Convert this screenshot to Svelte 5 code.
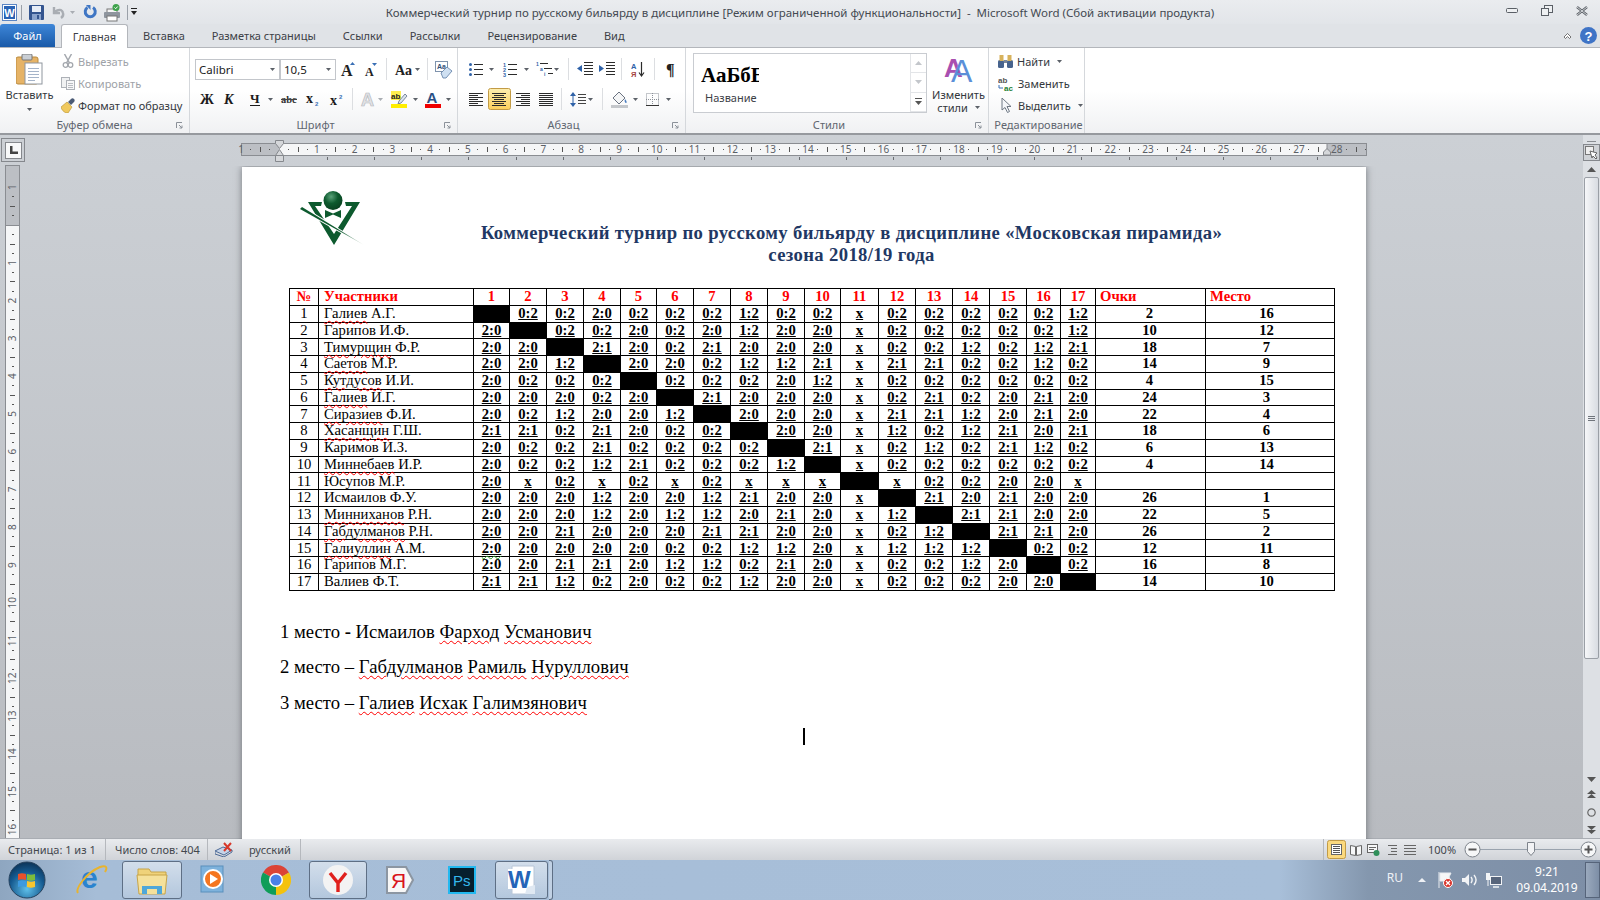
<script>
  const bar = (x, y, w, c = '#333', h = 1) => `<rect x="${x}" y="${y}" width="${w}" height="${h}" fill="${c}"/>`
  const txt = (x, y, s, size, fill = '#222', extra = '') =>
    `<text x="${x}" y="${y}" font-size="${size}" fill="${fill}" ${extra}>${s}</text>`
  const serif = 'font-family="Liberation Serif" font-weight="bold"'
  const sans = 'font-family="Liberation Sans" font-weight="bold"'
  const lines = (spec, c = '#333') => spec.map(([x, y, w]) => bar(x, y, w, c)).join('')
  const alignRows = (xs) => xs.map(([x, w], k) => bar(x, k * 2, w, '#2b2b2b')).join('')

  const icons = {
    word: { w: 15, h: 17, s: `<rect x=".5" y=".5" width="14" height="16" fill="#fff" stroke="#5b86c4"/><rect x="2" y="2" width="11" height="13" fill="#2a63b4"/>` + txt(2.2, 13, 'W', 11, '#fff', sans) },
    qsep: { w: 1, h: 15, s: bar(0, 0, 1, '#9aa0a8', 15) },
    save: { w: 15, h: 15, s: `<rect width="15" height="15" rx="1" fill="#34558f"/><rect x="3" y="1" width="9" height="6" fill="#e8eef7"/><rect x="3" y="9" width="9" height="6" fill="#8aa3cc"/><rect x="8" y="10" width="2" height="4" fill="#34558f"/>` },
    undo: { w: 13, h: 13, s: `<path d="M2 1v6h6M3 6c3-3 7-3 8 1 .6 2-.5 4-2 5" fill="none" stroke="#a9adb3" stroke-width="2.4"/>` },
    dim: { w: 5, h: 3, s: `<path d="M0 0h5l-2.500 3z" fill="#a9adb3"/>` },
    redo: { w: 13, h: 14, s: `<path d="M9 2.500a5 5 0 1 1-5.500 0" fill="none" stroke="#3f76c4" stroke-width="3"/><path d="M2 0h4.500v5z" fill="#3f76c4"/>` },
    print: { w: 17, h: 17, s: `<rect x="3" y="5" width="10" height="4" fill="#f5f5f5" stroke="#777"/><rect y="8" width="16" height="6" rx="1" fill="#8e959e"/><rect x="3" y="12" width="10" height="5" fill="#fff" stroke="#777"/><circle cx="12" cy="3.500" r="3.500" fill="#3fa34d"/><path d="M10.500 3.500l1.200 1.200 2-2.200" stroke="#fff" fill="none"/>` },
    custom: { w: 6, h: 8, s: bar(0, 0, 6, '#222') + `<path d="M0 3h6L3 7z" fill="#222"/>` },

    paste: { w: 27, h: 31, s: `<rect y="3" width="22" height="27" rx="2" fill="#e6b366" stroke="#b98a3e"/><rect x="6" y="0" width="10" height="6" rx="1" fill="#c9ced4" stroke="#777"/><rect x="9" y="9" width="17" height="21" fill="#fff" stroke="#8f969e"/>` + lines([[12, 14, 11], [12, 17, 11], [12, 20, 11], [12, 23, 11], [12, 26, 7]], '#a5b4c9') },
    cut: { w: 11, h: 14, s: `<path d="M2 0l5 9M9 0L4 9" stroke="#a4a8ae" stroke-width="1.500"/><circle cx="3" cy="11" r="2.300" fill="none" stroke="#a4a8ae" stroke-width="1.300"/><circle cx="8" cy="11" r="2.300" fill="none" stroke="#a4a8ae" stroke-width="1.300"/>` },
    copy: { w: 14, h: 13, s: `<rect x=".5" y=".5" width="8" height="10" fill="#f0f1f2" stroke="#adb1b7"/><rect x="5.500" y="3.500" width="8" height="9" fill="#f7f7f8" stroke="#adb1b7"/>` + lines([[7, 6, 5], [7, 8, 5], [7, 10, 5]], '#b9bcc1') },
    brush: { w: 16, h: 15, s: `<path d="M0 9l6-5 5 5-4 6C4 15 1 13 0 9z" fill="#f0c95e" stroke="#b48f2f" stroke-width=".6"/><path d="M7 4l3-3c2-2 5 1 3 3l-3 3z" fill="#4a5a75"/>` },

    grow: { w: 13, h: 14, s: txt(0, 14, 'A', 16, '#222', serif) + `<path d="M9 3l2.500-3L14 3z" fill="#3a6fb5"/>` },
    shrink: { w: 13, h: 14, s: txt(1, 14, 'A', 12, '#222', serif) + `<path d="M8 1h5l-2.500 3z" fill="#3a6fb5"/>` },
    sep: { w: 1, h: 22, s: bar(0, 0, 1, '#dcdee1', 22) },
    case: { w: 18, h: 14, s: txt(0, 13, 'Aa', 14, '#222', serif) },
    ar: { w: 5, h: 3, s: `<path d="M0 0h5l-2.500 3z" fill="#5c6168"/>` },
    clear: { w: 17, h: 17, s: `<rect x=".5" y=".5" width="12" height="10" fill="#fff" stroke="#7f93ad"/>` + txt(2, 8, 'Aa', 7, '#33507a', sans) + `<path d="M6 12l6-6 5 4-6 7H8z" fill="#cfe0f2" stroke="#5b7ba3" stroke-width=".8"/>` },
    bold: { w: 13, h: 14, s: txt(0, 12, 'Ж', 14, '#1b1b1b', serif) },
    ital: { w: 12, h: 14, s: txt(0, 12, 'К', 14, '#1b1b1b', serif + ' font-style="italic"') },
    under: { w: 10, h: 15, s: txt(0, 11, 'Ч', 13, '#1b1b1b', serif) + bar(0, 13, 10, '#1b1b1b') },
    strike: { w: 16, h: 12, s: txt(0, 10, 'abc', 10.500, '#333', serif) + bar(0, 6, 16, '#444') },
    sub: { w: 13, h: 13, s: txt(0, 10, 'x', 14, '#1b1b1b', serif) + txt(9, 13, '2', 6, '#3a6fb5', sans) },
    sup: { w: 13, h: 13, s: txt(0, 12, 'x', 14, '#1b1b1b', serif) + txt(9, 6, '2', 6, '#3a6fb5', sans) },
    effect: { w: 14, h: 15, s: txt(0, 14, 'A', 18, '#e2e3e6', sans + ' stroke="#b6b9be" stroke-width=".7"') },
    high: { w: 16, h: 17, s: `<rect width="10" height="9" fill="#ffef4f"/>` + txt(0, 8, 'ab', 8, '#222', sans) + `<path d="M8 10l6-7 2 2-6 7-3 1z" fill="#dbe4ee" stroke="#5d6f88" stroke-width=".8"/>` + bar(0, 13, 16, '#ffee00', 4) },
    color: { w: 16, h: 17, s: txt(1.500, 12, 'A', 15, '#2a4f85', sans) + bar(0, 13, 16, '#f00000', 4) },

    bullets: { w: 14, h: 13, s: [0, 5, 10].map(y => `<circle cx="1.500" cy="${y + 1.500}" r="1.500" fill="#2f62a8"/>` + bar(5, y + 1, 9, '#2b2b2b')).join('') },
    numbers: { w: 14, h: 13, s: [['1', 0], ['2', 5], ['3', 10]].map(([n, y]) => txt(0, y + 4, n, 5.500, '#2f62a8', sans) + bar(5, y + 1, 9, '#2b2b2b')).join('') },
    multi: { w: 17, h: 14, s: txt(0, 4, '1', 5, '#2f62a8', sans) + bar(4, 1, 8, '#2b2b2b') + txt(4, 9, 'a', 5, '#2f62a8', sans) + bar(8, 6, 8, '#2b2b2b') + txt(8, 14, 'i', 5, '#2f62a8', sans) + bar(12, 11, 5, '#2b2b2b') },
    outdent: { w: 16, h: 14, s: [0, 3, 6, 9, 12].map(y => bar(7, y, 9, '#2b2b2b')).join('') + `<path d="M0 6.500L5 3v7z" fill="#2f62a8"/>` },
    indent: { w: 16, h: 14, s: [0, 3, 6, 9, 12].map(y => bar(7, y, 9, '#2b2b2b')).join('') + `<path d="M5 6.500L0 3v7z" fill="#2f62a8"/>` },
    sort: { w: 14, h: 15, s: txt(0, 7, 'А', 7.500, '#2f62a8', sans) + txt(0, 15, 'Я', 7.500, '#a3423f', sans) + `<path d="M10.500 0v13M8 10.500l2.500 3.500 2.500-3.500" fill="none" stroke="#2b2b2b" stroke-width="1.200"/>` },
    para: { w: 10, h: 15, s: txt(0, 13, '¶', 16, '#222', serif) },
    left: { w: 14, h: 13, s: alignRows([[0, 14], [0, 9], [0, 14], [0, 9], [0, 14], [0, 9], [0, 14]]) },
    centerOn: { w: 23, h: 22, s: `<defs><linearGradient id="hot" x1="0" y1="0" x2="0" y2="1"><stop offset="0" stop-color="#fdeeb0"/><stop offset="1" stop-color="#fbcf5c"/></linearGradient></defs><rect x=".5" y=".5" width="22" height="21" rx="2" fill="url(#hot)" stroke="#c29b46"/>` + [[4, 14], [6, 10], [4, 14], [6, 10], [4, 14], [6, 10], [4, 14]].map(([x, w], k) => bar(x, 5 + k * 2, w, '#2b2b2b')).join('') },
    right: { w: 14, h: 13, s: alignRows([[0, 14], [5, 9], [0, 14], [5, 9], [0, 14], [5, 9], [0, 14]]) },
    just: { w: 14, h: 13, s: alignRows([[0, 14], [0, 14], [0, 14], [0, 14], [0, 14], [0, 14], [0, 14]]) },
    spacing: { w: 16, h: 15, s: `<path d="M3 0L0 4h6zM3 15L0 11h6z" fill="#2f62a8"/>` + bar(2.500, 4, 1, '#2f62a8', 7) + [2, 5, 8, 11].map(y => bar(8, y, 8, '#444')).join('') },
    fill: { w: 17, h: 17, s: `<path d="M2 7l6-6 6 6-6 6z" fill="#f4f5f6" stroke="#6a7280"/><path d="M14 8c2 2 2 4 1 4s-2-2-1-4z" fill="#4c7fc0"/>` + bar(0, 14, 17, '#c4c7cb', 3) },
    borders: { w: 13, h: 13, s: `<rect x=".5" y=".5" width="12" height="12" fill="none" stroke="#8b9098" stroke-dasharray="1 1"/><path d="M6.500 0v13M0 6.500h13" stroke="#8b9098" stroke-dasharray="1 1"/>` + bar(0, 12, 13, '#333') },

    bino: { w: 15, h: 13, s: `<rect x="0" y="5" width="6" height="8" rx="1.500" fill="#47638d"/><rect x="9" y="5" width="6" height="8" rx="1.500" fill="#47638d"/><rect x="1.500" y="0" width="4" height="6" fill="#d7b25c"/><rect x="9.500" y="0" width="4" height="6" fill="#d7b25c"/><rect x="6" y="5" width="3" height="3" fill="#7a8698"/>` },
    replace: { w: 16, h: 15, s: txt(0, 7, 'ab', 8, '#555', sans) + txt(6, 15, 'ac', 8, '#1d7e2f', sans) + `<path d="M1 9v3h4" fill="none" stroke="#3a6fb5"/>` },
    select: { w: 10, h: 15, s: `<path d="M1 0v12l3-2.500 2.500 5 2-1-2.500-5H10z" fill="#f5f7fa" stroke="#6f7884"/>` },

    close: { w: 12, h: 10, s: `<path d="M1 1l10 8M11 1L1 9" stroke="#5a5f66" stroke-width="2.400"/><path d="M1 1l10 8M11 1L1 9" stroke="#eef0f2" stroke-width=".8"/>` },
    min: { w: 12, h: 5, s: `<rect x=".5" y=".5" width="11" height="4" rx="1" fill="#eef0f2" stroke="#5a5f66"/>` },
    restore: { w: 12, h: 11, s: `<rect x="3.500" y=".5" width="8" height="7" fill="#eef0f2" stroke="#5a5f66"/><rect x=".5" y="3.500" width="7" height="7" fill="#eef0f2" stroke="#5a5f66"/>` },
    up: { w: 9, h: 7, s: `<path d="M1 5l3.500-3.500L8 5 6.500 6.500 4.500 4.500l-2 2z" fill="#fff" stroke="#555" stroke-width=".8"/>` },
    help: { w: 17, h: 17, s: `<circle cx="8.500" cy="8.500" r="8.500" fill="#3f74c6"/>` + txt(4.500, 13.500, '?', 13, '#fff', sans) },

    book: { w: 18, h: 15, s: `<path d="M0 9l8-4 9 3-8 5z" fill="#c6d4e8" stroke="#4d6a97"/><path d="M0 10v2l9 3 8-5V8" fill="none" stroke="#4d6a97"/><path d="M9 1l7 8M16 1L9 9" stroke="#d8382a" stroke-width="2"/>` },
    printOn: { w: 19, h: 19, s: `<rect x=".5" y=".5" width="18" height="18" rx="2" fill="#fbd97e" stroke="#c29b46"/><rect x="4.500" y="4.500" width="10" height="10" fill="#fff" stroke="#666"/>` + [6, 8, 10, 12].map(y => bar(6, y, 7, '#555')).join('') },
    read: { w: 12, h: 12, s: `<path d="M.5 1.500l5 1v9l-5-1zM11.500 1.500l-5 1v9l5-1z" fill="#f6f7f8" stroke="#666"/>` },
    web: { w: 13, h: 12, s: `<rect x=".5" y=".5" width="10" height="8" fill="#f6f7f8" stroke="#666"/><circle cx="9.500" cy="9" r="3" fill="#2f8f5a"/>` + lines([[2, 3, 7], [2, 5, 5]], '#666') },
    outline: { w: 10, h: 10, s: lines([[1, 0, 9], [4, 3, 6], [4, 6, 6], [1, 9, 9]], '#666') },
    draft: { w: 12, h: 10, s: lines([[0, 0, 12], [0, 3, 12], [0, 6, 12], [0, 9, 12]], '#666') },

    flagTray: { w: 15, h: 16, s: `<path d="M1 0v16M2 1h11l-2 4 2 4H2z" fill="#f6f7f8" stroke="#e9ecf0"/><circle cx="10" cy="11" r="4.500" fill="#d9342b" stroke="#fff"/><path d="M8 9l4 4M12 9l-4 4" stroke="#fff" stroke-width="1.300"/>` },
    speaker: { w: 15, h: 14, s: `<path d="M0 5h3l4-4v12l-4-4H0z" fill="#f2f4f6"/><path d="M9 4c1.500 2 1.500 4 0 6M12 2c2.500 3 2.500 7 0 10" fill="none" stroke="#f2f4f6" stroke-width="1.400"/>` },
    network: { w: 16, h: 15, s: `<rect x="4.500" y="3.500" width="11" height="8" fill="#57657b" stroke="#f2f4f6"/><path d="M7 14h6" stroke="#f2f4f6" stroke-width="1.500"/><rect x="0" y="0" width="4" height="7" fill="#f2f4f6"/><path d="M2 7v6" stroke="#f2f4f6"/>` },
    trayUp: { w: 8, h: 4, s: `<path d="M0 4l4-4 4 4z" fill="#eef1f5"/>` }
  }

  // items are [icon, absolute x]; the gap before each one comes from the x of the previous
  function place(items, x0) {
    let cur = x0
    return items.map(([name, x]) => {
      const ic = icons[name]
      const gap = Math.round(x - cur)
      cur = x + ic.w
      return { ...ic, gap }
    })
  }

  const qat = [['word', 2], ['qsep', 21], ['save', 29], ['undo', 52], ['dim', 70], ['redo', 84], ['print', 104], ['qsep', 127], ['custom', 131]]
  const winBtns = [['min', 1507], ['restore', 1542], ['close', 1577]]
  const font1 = [['grow', 341], ['shrink', 364], ['sep', 386], ['case', 395], ['ar', 415], ['sep', 427], ['clear', 435]]
  const font2 = [['bold', 200], ['ital', 224], ['under', 250], ['ar', 268], ['strike', 281], ['sub', 306], ['sup', 330], ['sep', 352], ['effect', 361], ['dim', 378], ['high', 391], ['ar', 413], ['color', 425], ['ar', 446]]
  const para1 = [['bullets', 469], ['ar', 489], ['numbers', 503], ['ar', 524], ['multi', 536], ['ar', 554], ['sep', 568], ['outdent', 577], ['indent', 599], ['sep', 621], ['sort', 631], ['sep', 654], ['para', 666]]
  const para2 = [['left', 469], ['centerOn', 488], ['right', 516], ['just', 539], ['sep', 561], ['spacing', 570], ['ar', 588], ['sep', 602], ['fill', 611], ['ar', 633], ['borders', 646], ['ar', 666]]
  const statusViews = [['printOn', 1327], ['read', 1350], ['web', 1367], ['outline', 1387], ['draft', 1404]]
  const tray = [['trayUp', 1418], ['flagTray', 1438], ['speaker', 1462], ['network', 1486]]

  const tabs = ['Вставка', 'Разметка страницы', 'Ссылки', 'Рассылки', 'Рецензирование', 'Вид']

  const cm = 37.78
  const hOrigin = 279
  const hNums = Array.from({ length: 30 }, (_, k) => k - 1).filter(n => n !== 0)
  const hMarks = Array.from({ length: 120 }, (_, k) => hOrigin - 38 + (k + 1) * cm / 4)
    .filter(x => x < 1365)
  const colTicks = Array.from({ length: 22 }, (_, k) => 327 + k * 47.15)
  const vNums = Array.from({ length: 18 }, (_, k) => k - 1).filter(n => n !== 0)
  const vMarks = Array.from({ length: 72 }, (_, k) => 187 + (k + 1) * cm / 4)

  const people = [
    ['Галиев', 'А.Г.', true, '# 0:2 0:2 2:0 0:2 0:2 0:2 1:2 0:2 0:2 x 0:2 0:2 0:2 0:2 0:2 1:2', '2', '16'],
    ['Гарипов', 'И.Ф.', false, '2:0 # 0:2 0:2 2:0 0:2 2:0 1:2 2:0 2:0 x 0:2 0:2 0:2 0:2 0:2 1:2', '10', '12'],
    ['Тимурщин', 'Ф.Р.', true, '2:0 2:0 # 2:1 2:0 0:2 2:1 2:0 2:0 2:0 x 0:2 0:2 1:2 0:2 1:2 2:1', '18', '7'],
    ['Саетов', 'М.Р.', true, '2:0 2:0 1:2 # 2:0 2:0 0:2 1:2 1:2 2:1 x 2:1 2:1 0:2 0:2 1:2 0:2', '14', '9'],
    ['Кутдусов', 'И.И.', true, '2:0 0:2 0:2 0:2 # 0:2 0:2 0:2 2:0 1:2 x 0:2 0:2 0:2 0:2 0:2 0:2', '4', '15'],
    ['Галиев', 'И.Г.', true, '2:0 2:0 2:0 0:2 2:0 # 2:1 2:0 2:0 2:0 x 0:2 2:1 0:2 2:0 2:1 2:0', '24', '3'],
    ['Сиразиев', 'Ф.И.', true, '2:0 0:2 1:2 2:0 2:0 1:2 # 2:0 2:0 2:0 x 2:1 2:1 1:2 2:0 2:1 2:0', '22', '4'],
    ['Хасанщин', 'Г.Ш.', true, '2:1 2:1 0:2 2:1 2:0 0:2 0:2 # 2:0 2:0 x 1:2 0:2 1:2 2:1 2:0 2:1', '18', '6'],
    ['Каримов', 'И.З.', false, '2:0 0:2 0:2 2:1 0:2 0:2 0:2 0:2 # 2:1 x 0:2 1:2 0:2 2:1 1:2 0:2', '6', '13'],
    ['Миннебаев', 'И.Р.', true, '2:0 0:2 0:2 1:2 2:1 0:2 0:2 0:2 1:2 # x 0:2 0:2 0:2 0:2 0:2 0:2', '4', '14'],
    ['Юсупов', 'М.Р.', false, '2:0 x 0:2 x 0:2 x 0:2 x x x # x 0:2 0:2 2:0 2:0 x', '', ''],
    ['Исмаилов', 'Ф.У.', false, '2:0 2:0 2:0 1:2 2:0 2:0 1:2 2:1 2:0 2:0 x # 2:1 2:0 2:1 2:0 2:0', '26', '1'],
    ['Минниханов', 'Р.Н.', true, '2:0 2:0 2:0 1:2 2:0 1:2 1:2 2:0 2:1 2:0 x 1:2 # 2:1 2:1 2:0 2:0', '22', '5'],
    ['Габдулманов', 'Р.Н.', true, '2:0 2:0 2:1 2:0 2:0 2:0 2:1 2:1 2:0 2:0 x 0:2 1:2 # 2:1 2:1 2:0', '26', '2'],
    ['Галиуллин', 'А.М.', true, '2:0 2:0 2:0 2:0 2:0 0:2 0:2 1:2 1:2 2:0 x 1:2 1:2 1:2 # 0:2 0:2', '12', '11'],
    ['Гарипов', 'М.Г.', false, '2:0 2:0 2:1 2:1 2:0 1:2 1:2 0:2 2:1 2:0 x 0:2 0:2 1:2 2:0 # 0:2', '16', '8'],
    ['Валиев', 'Ф.Т.', false, '2:1 2:1 1:2 0:2 2:0 0:2 0:2 1:2 2:0 2:0 x 0:2 0:2 0:2 2:0 2:0 #', '14', '10']
  ]
  const colWidths = [29, 155, 36, 37, 37, 37, 36, 37, 37, 37, 37, 36, 38, 37, 37, 37, 37, 34, 35, 110, 129]
</script>

{#snippet strip(items, x0, cls = '')}
  <div class="strip {cls}">
    {#each place(items, x0) as it}
      <svg width={it.w} height={it.h} viewBox="0 0 {it.w} {it.h}" style="margin-left:{it.gap}px">{@html it.s}</svg>
    {/each}
  </div>
{/snippet}

{#snippet launcher()}
  <svg class="launcher" width="7" height="7" viewBox="0 0 7 7"><path d="M.5 6V.5H6M3 3l3 3M6 3.500V6H3.500" fill="none" stroke="#8b9199"/></svg>
{/snippet}

<div class="word">
  <header class="titlebar">
    {@render strip(qat, 0)}
    <div class="doc-title">Коммерческий турнир по русскому бильярду в дисциплине [Режим ограниченной функциональности]&nbsp; -&nbsp; Microsoft Word (Сбой активации продукта)</div>
    {@render strip(winBtns, 1507, 'winbtns')}
  </header>

  <nav class="tabs">
    <span class="tab-file">Файл</span>
    <span class="tab-active">Главная</span>
    {#each tabs as t}<span class="tab">{t}</span>{/each}
    <div class="tab-right">
      <svg width="9" height="7" viewBox="0 0 9 7">{@html icons.up.s}</svg>
      <svg width="17" height="17" viewBox="0 0 17 17">{@html icons.help.s}</svg>
    </div>
  </nav>

  <section class="ribbon">
    <div class="group g-clip">
      <div class="body">
        <div class="paste">
          <svg width="27" height="31" viewBox="0 0 27 31">{@html icons.paste.s}</svg>
          <span>Вставить</span>
          <svg width="5" height="3" viewBox="0 0 5 3">{@html icons.ar.s}</svg>
        </div>
        <div class="clip-list">
          <div class="clip-row off"><svg width="11" height="14" viewBox="0 0 11 14">{@html icons.cut.s}</svg><span>Вырезать</span></div>
          <div class="clip-row off"><svg width="14" height="13" viewBox="0 0 14 13">{@html icons.copy.s}</svg><span>Копировать</span></div>
          <div class="clip-row fmt"><svg width="16" height="15" viewBox="0 0 16 15">{@html icons.brush.s}</svg><span>Формат по образцу</span></div>
        </div>
      </div>
      <div class="label">Буфер обмена</div>
      {@render launcher()}
    </div>

    <div class="group g-font">
      <div class="body tool-rows">
        <div class="row">
          <div class="combo c-name"><span>Calibri</span><svg width="5" height="3" viewBox="0 0 5 3">{@html icons.ar.s}</svg></div>
          <div class="combo c-size"><span>10,5</span><svg width="5" height="3" viewBox="0 0 5 3">{@html icons.ar.s}</svg></div>
          {@render strip(font1, 336)}
        </div>
        {@render strip(font2, 190, 'row')}
      </div>
      <div class="label off-launcher">Шрифт</div>
      {@render launcher()}
    </div>

    <div class="group g-para">
      <div class="body tool-rows">
        {@render strip(para1, 458, 'row')}
        {@render strip(para2, 458, 'row')}
      </div>
      <div class="label off-launcher">Абзац</div>
      {@render launcher()}
    </div>

    <div class="group g-styles">
      <div class="body styles-body">
        <div class="gallery">
          <div class="style-card">
            <div class="sample">АаБбЕ</div>
            <div class="sample-name">Название</div>
          </div>
          <div class="gal-scroll">
            <span><svg width="7" height="4" viewBox="0 0 7 4"><path d="M0 4l3.500-4L7 4z" fill="#c3c6cb"/></svg></span>
            <span><svg width="7" height="4" viewBox="0 0 7 4"><path d="M0 0l3.500 4L7 0z" fill="#c3c6cb"/></svg></span>
            <span><svg width="7" height="7" viewBox="0 0 7 7"><path d="M0 0h7v1H0zM0 3l3.500 4L7 3z" fill="#555"/></svg></span>
          </div>
        </div>
        <div class="change">
          <svg width="32" height="30" viewBox="0 0 32 30">
            <text x="1" y="24" font-size="26" font-family="Liberation Sans" font-weight="bold" fill="#a94fb0">A</text>
            <text x="8" y="29" font-size="32" font-family="Liberation Sans" fill="#5b8fd8">A</text>
          </svg>
          <span>Изменить</span>
          <span class="change-2">стили <svg width="5" height="3" viewBox="0 0 5 3">{@html icons.ar.s}</svg></span>
        </div>
      </div>
      <div class="label off-launcher">Стили</div>
      {@render launcher()}
    </div>

    <div class="group g-edit">
      <div class="body edit-list">
        <div class="edit-row"><svg width="15" height="13" viewBox="0 0 15 13">{@html icons.bino.s}</svg><span>Найти</span><svg width="5" height="3" viewBox="0 0 5 3">{@html icons.ar.s}</svg></div>
        <div class="edit-row"><svg width="16" height="15" viewBox="0 0 16 15">{@html icons.replace.s}</svg><span>Заменить</span></div>
        <div class="edit-row sel"><svg width="10" height="15" viewBox="0 0 10 15">{@html icons.select.s}</svg><span>Выделить</span><svg width="5" height="3" viewBox="0 0 5 3">{@html icons.ar.s}</svg></div>
      </div>
      <div class="label edit-label">Редактирование</div>
    </div>
  </section>

  <div class="workspace">
    <div class="corner">
      <div class="tab-stop"><svg width="8" height="8" viewBox="0 0 8 8"><path d="M0 0h2.500v5.500H8V8H0z" fill="#444"/></svg></div>
    </div>

    <svg class="hruler" width="1558" height="31" viewBox="25 134 1558 31">
      <rect x="241.500" y="142.500" width="1125" height="12" fill="#bcbfc4" stroke="#8a8d92"/>
      <rect x="279" y="143" width="1048" height="11" fill="#f5f6f7"/>
      <path d="M1327 142v12" stroke="#8a8d92"/>
      {#each hMarks as x, k}
        {#if (k + 1) % 4 === 2}
          <rect x={Math.round(x)} y="146" width="1" height="5" fill="#555"/>
        {:else if (k + 1) % 4 !== 0}
          <rect x={Math.round(x)} y="148" width="1" height="1" fill="#555"/>
        {/if}
      {/each}
      {#each hNums as n}
        <text x={hOrigin + n * cm} y="151.500" text-anchor="middle" class="rnum">{Math.abs(n)}</text>
      {/each}
      {#each colTicks as x}
        <rect x={Math.round(x)} y="156" width="1" height="3" fill="#6a6d72"/>
      {/each}
      <path d="M275.500 139.500h8v3l-4 5-4-5zM275.500 154.500l4-6 4 6v6h-8z" fill="#d5d7da" stroke="#85888d"/>
      <path d="M275.500 154.500h8" stroke="#85888d"/>
      <path d="M1323.500 154v-3l3.500-3.500 3.500 3.500v3z" fill="#d5d7da" stroke="#85888d"/>
    </svg>

    <div class="scrollbar">
      <i class="split"></i>
      <div class="view-btn">
        <svg width="13" height="13" viewBox="0 0 13 13"><rect x=".5" y=".5" width="8" height="8" fill="#eee" stroke="#777"/><path d="M5 5l7 2-2 2 2 3-1 1-3-3-1 2z" fill="#fff" stroke="#666"/></svg>
      </div>
      <svg class="sb-arrow" width="9" height="5" viewBox="0 0 9 5"><path d="M0 5l4.500-5L9 5z" fill="#555"/></svg>
      <div class="thumb"><i></i><i></i><i></i></div>
      <svg class="sb-down" width="9" height="5" viewBox="0 0 9 5"><path d="M0 0l4.500 5L9 0z" fill="#555"/></svg>
      <svg class="sb-prev" width="9" height="8" viewBox="0 0 9 8"><path d="M0 4l4.500-4L9 4zM0 8l4.500-4L9 8z" fill="#555"/></svg>
      <svg class="sb-dot" width="9" height="9" viewBox="0 0 9 9"><circle cx="4.500" cy="4.500" r="3.700" fill="none" stroke="#666" stroke-width="1.200"/></svg>
      <svg class="sb-next" width="9" height="8" viewBox="0 0 9 8"><path d="M0 0l4.500 4L9 0zM0 4l4.500 4L9 4z" fill="#555"/></svg>
    </div>

    <svg class="vruler" width="25" height="674" viewBox="0 165 25 674">
      <rect x="5.500" y="165.500" width="14" height="680" fill="#f5f6f7" stroke="#8a8d92"/>
      <rect x="6" y="166" width="13" height="59" fill="#bcbfc4"/>
      <path d="M5 225.500h15" stroke="#8a8d92"/>
      {#each vMarks as y, k}
        {#if (k + 1) % 4 === 2}
          <rect x="10" y={Math.round(y)} width="5" height="1" fill="#555"/>
        {:else if (k + 1) % 4 !== 0}
          <rect x="12" y={Math.round(y)} width="2" height="1" fill="#555"/>
        {/if}
      {/each}
      {#each vNums as n}
        <text transform="translate(16 {225 + n * cm}) rotate(-90)" text-anchor="middle" class="rnum">{Math.abs(n)}</text>
      {/each}
    </svg>

    <div class="canvas">
      <article class="page">
        <div class="head">
          <svg class="logo" width="72" height="62" viewBox="0 0 72 62">
            <defs>
              <linearGradient id="cue" x1="0" y1="0" x2="1" y2="1"><stop offset=".6" stop-color="#0d5a2e"/><stop offset="1" stop-color="#dfe8e1"/></linearGradient>
              <radialGradient id="ball" cx=".4" cy=".3" r=".8"><stop offset="0" stop-color="#5aa279"/><stop offset=".45" stop-color="#0d5a2e"/><stop offset="1" stop-color="#073b1c"/></radialGradient>
            </defs>
            <path d="M9 16H23L22 20H16L35 48 53 20H47L46 16H61L35 59z" fill="#0d5a2e"/>
            <circle cx="34" cy="14.500" r="9.500" fill="url(#ball)"/>
            <path d="M26 24l8 3.500 8-3.500v8l-8-3.500-8 3.500z" fill="#0d5a2e"/>
            <path d="M1 23L3 21 65 59z" fill="#fff" stroke="#fff" stroke-width="2"/>
            <path d="M1 23L3 21 65 59z" fill="url(#cue)"/>
          </svg>
          <h1>Коммерческий турнир по русскому бильярду в дисциплине «Московская пирамида»<br>сезона 2018/19 года</h1>
        </div>

        <table>
          <colgroup>{#each colWidths as w}<col style="width:{w}px">{/each}</colgroup>
          <thead>
            <tr>
              <th class="num">№</th>
              <th class="lft">Участники</th>
              {#each Array(17) as _, k}<th>{k + 1}</th>{/each}
              <th class="lft4">Очки</th>
              <th class="lft4">Место</th>
            </tr>
          </thead>
          <tbody>
            {#each people as [last, init, flagged, scores, points, place_], r}
              <tr>
                <td class="num">{r + 1}</td>
                <td class="name"><span class:sp={flagged}>{last}</span> {init}</td>
                {#each scores.split(' ') as s, c}
                  {#if s === '#'}
                    <td class="black"></td>
                  {:else}
                    <td class="score"><span class:gr={r === 14 && c === 0}>{s}</span></td>
                  {/if}
                {/each}
                <td class="res r-pts">{points}</td>
                <td class="res r-place">{place_}</td>
              </tr>
            {/each}
          </tbody>
        </table>

        <div class="results">
          <p>1 место <b>-</b> Исмаилов <span class="names"><span class="sp">Фарход</span> <span class="sp">Усманович</span></span></p>
          <p>2 место – <span class="names"><span class="sp">Габдулманов</span> <span class="sp">Рамиль</span> <span class="sp">Нуруллович</span></span></p>
          <p>3 место – <span class="names"><span class="sp">Галиев</span> <span class="sp">Исхак</span> <span class="sp">Галимзянович</span></span></p>
        </div>
        <i class="caret"></i>
      </article>
    </div>
  </div>

  <footer class="status">
    <span class="seg s1">Страница: 1 из 1</span>
    <span class="seg s2">Число слов: 404</span>
    <span class="seg s3">
      <svg width="18" height="15" viewBox="0 0 18 15">{@html icons.book.s}</svg>
      <span>русский</span>
    </span>
    <div class="status-right">
      <i class="status-sep"></i>
      {@render strip(statusViews, 1324)}
      <span class="zoom-val">100%</span>
      <svg class="zoom" width="133" height="17" viewBox="0 0 133 17">
        <path d="M16 8.500h100" stroke="#9aa3ae"/>
        <circle cx="8.500" cy="8.500" r="7.500" fill="#f6f7f8" stroke="#7d838b"/>
        <rect x="4.500" y="7.500" width="8" height="2" fill="#555"/>
        <circle cx="124.500" cy="8.500" r="7.500" fill="#f6f7f8" stroke="#7d838b"/>
        <rect x="120.500" y="7.500" width="8" height="2" fill="#555"/>
        <rect x="123.500" y="4.500" width="2" height="8" fill="#555"/>
        <path d="M63.500 1.500h7v9l-3.500 4-3.500-4z" fill="#f2f3f5" stroke="#7d838b"/>
      </svg>
    </div>
  </footer>

  <div class="taskbar">
    <span class="orb">
      <svg width="38" height="38" viewBox="0 0 38 38">
        <defs><radialGradient id="orbg" cx=".5" cy=".75" r=".8"><stop offset="0" stop-color="#5fc0ea"/><stop offset=".6" stop-color="#14598f"/><stop offset="1" stop-color="#0a2c4d"/></radialGradient></defs>
        <circle cx="19" cy="19" r="18" fill="url(#orbg)" stroke="#26425e"/>
        <path d="M10 13c3-1 5-1 8 0v6c-3-1-5-1-8 0z" fill="#e8512b"/>
        <path d="M19 13c3 1 5 1 8 0v6c-3 1-5 1-8 0z" fill="#7cbc3c"/>
        <path d="M10 20c3-1 5-1 8 0v6c-3-1-5-1-8 0z" fill="#3d9ae0"/>
        <path d="M19 20c3 1 5 1 8 0v6c-3 1-5 1-8 0z" fill="#f8c52e"/>
      </svg>
    </span>
    <span class="task t-ie">
      <svg width="32" height="32" viewBox="0 0 32 32">
        <text x="5" y="24" font-size="30" font-family="Liberation Sans" font-weight="bold" fill="#2a83cf">e</text>
        <path d="M2 29C-1 25 10 9 24 3c6-2 8 0 5 5" fill="none" stroke="#e8b32e" stroke-width="2"/>
      </svg>
    </span>
    <span class="task box t-explorer">
      <svg width="32" height="32" viewBox="0 0 32 32">
        <path d="M2 5h11l2 3h15v5H2z" fill="#efd27a" stroke="#c7a449"/>
        <path d="M1 11h30l-2 19H3z" fill="#f5e19b" stroke="#c7a449"/>
        <rect x="6" y="22" width="20" height="8" fill="#4fa7d8"/>
        <rect x="11" y="25" width="10" height="5" fill="#f5e19b"/>
      </svg>
    </span>
    <span class="task t-media">
      <svg width="30" height="30" viewBox="0 0 30 30">
        <rect x="1" y="1" width="22" height="26" fill="#7eb2dc" stroke="#5a90bc"/>
        <circle cx="13" cy="14" r="9" fill="#f5761f" stroke="#fff" stroke-width="2"/>
        <path d="M10 9l8 5-8 5z" fill="#fff"/>
      </svg>
    </span>
    <span class="task t-chrome">
      <svg width="30" height="30" viewBox="0 0 30 30">
        <path d="M15 15L2 7.500A15 15 0 0 1 28 7.500z" fill="#db4437"/>
        <path d="M15 15L28 7.500A15 15 0 0 1 15 30z" fill="#f4c20d"/>
        <path d="M15 15L15 30A15 15 0 0 1 2 7.500z" fill="#0f9d58"/>
        <circle cx="15" cy="15" r="7" fill="#fff"/>
        <circle cx="15" cy="15" r="5.500" fill="#4a80e8"/>
      </svg>
    </span>
    <span class="task box t-yandex">
      <svg width="30" height="30" viewBox="0 0 30 30">
        <circle cx="15" cy="15" r="15" fill="#f3f3f3"/>
        <path d="M7 8l8 10 8-10M15 18v9" fill="none" stroke="#e0201c" stroke-width="3.400"/>
      </svg>
    </span>
    <span class="task t-ya">
      <svg width="30" height="30" viewBox="0 0 30 30">
        <path d="M2 2h19l7 13-7 13H2z" fill="#f7f7f7" stroke="#8c96a2" stroke-width="2"/>
        <text x="6" y="23" font-size="21" font-family="Liberation Sans" fill="#d9141c">Я</text>
      </svg>
    </span>
    <span class="task t-ps">
      <svg width="28" height="28" viewBox="0 0 28 28">
        <rect x="1" y="1" width="26" height="26" fill="#061e2d" stroke="#22b8f0" stroke-width="2"/>
        <text x="5" y="20" font-size="15" font-family="Liberation Sans" fill="#35b7ee">Ps</text>
      </svg>
    </span>
    <span class="task box t-word">
      <svg width="30" height="30" viewBox="0 0 30 30">
        <path d="M5 1h22v28H5z" fill="#fff" stroke="#b8c6d8"/>
        <rect x="1" y="4" width="22" height="20" fill="#fff"/>
        <text x="1" y="23" font-size="24" font-family="Liberation Sans" font-weight="bold" fill="#2465b8">W</text>
        <path d="M20 22l8-2v9H18z" fill="#dfe8f2"/>
      </svg>
    </span>
    <i class="task-sliver"></i>

    <div class="tray">
      <span class="lang">RU</span>
      {@render strip(tray, 1403)}
      <div class="clock"><span>9:21</span><span>09.04.2019</span></div>
      <i class="show-desktop"></i>
    </div>
  </div>
</div>

<style>
  :global(body) {
    margin: 0;
    overflow: hidden;
  }

  .word {
    width: 1600px;
    height: 900px;
    display: flex;
    flex-direction: column;
    font-family: "Noto Sans", sans-serif;
    font-size: 11px;
    color: #3c4046;
    overflow: hidden;
  }

  .word svg {
    flex: none;
    display: block;
  }

  .strip {
    display: flex;
    align-items: center;
  }

  .strip svg {
    overflow: visible;
  }

  .titlebar {
    height: 24px;
    display: grid;
    grid-template-columns: 1fr auto 1fr;
    align-items: center;
    background: linear-gradient(#eaecef, #e2e5e9);
  }

  .doc-title {
    font-size: 11.5px;
    color: #444a52;
    white-space: nowrap;
  }

  .winbtns {
    justify-content: flex-end;
    padding-right: 12px;
    padding-bottom: 3px;
  }

  .tabs {
    height: 23px;
    display: flex;
    align-items: stretch;
    background: #e0e3e7;
    border-bottom: 1px solid #b3b6bb;
    position: relative;
  }

  .tab-file {
    width: 55px;
    display: flex;
    align-items: center;
    justify-content: center;
    color: #fff;
    background: linear-gradient(#3d86d8, #1a5aa8);
    border-radius: 3px 3px 0 0;
  }

  .tab-active {
    box-sizing: border-box;
    margin-left: 6px;
    width: 67px;
    height: 24px;
    padding-bottom: 1px;
    display: flex;
    align-items: center;
    justify-content: center;
    background: #fff;
    border: 1px solid #b3b6bb;
    border-bottom: none;
    border-radius: 3px 3px 0 0;
    z-index: 1;
  }

  .tab {
    display: flex;
    align-items: center;
    margin-left: 27px;
  }

  .tab-active + .tab {
    margin-left: 15px;
  }

  .tab-right {
    margin-left: auto;
    display: flex;
    align-items: center;
    gap: 8px;
    padding-right: 3px;
  }

  .ribbon {
    height: 85px;
    display: flex;
    background: linear-gradient(#fff 50%, #f0f1f3);
    border-bottom: 2px solid #96999e;
  }

  .group {
    position: relative;
    display: flex;
    flex-direction: column;
    box-sizing: border-box;
    border-right: 1px solid #d5d8dc;
  }

  .g-clip { width: 190px; }
  .g-font { width: 268px; }
  .g-para { width: 228px; }
  .g-styles { width: 303px; }
  .g-edit { width: 96px; }

  .body {
    flex: 1;
    min-height: 0;
    display: flex;
  }

  .label {
    height: 17px;
    line-height: 18px;
    text-align: center;
    color: #5f6670;
  }

  .off-launcher {
    padding-right: 16px;
  }

  .edit-label {
    padding-left: 4px;
  }

  .launcher {
    position: absolute;
    right: 6px;
    bottom: 4px;
  }

  .paste {
    width: 59px;
    display: flex;
    flex-direction: column;
    align-items: center;
    padding-top: 6px;
  }

  .paste span {
    margin-top: 2px;
    line-height: 16px;
    color: #33373c;
  }

  .paste svg:last-child {
    margin-top: 5px;
  }

  .clip-list {
    padding-top: 2px;
  }

  .clip-row {
    height: 22px;
    display: flex;
    align-items: center;
    margin-left: 2px;
    color: #33373c;
    white-space: nowrap;
  }

  .clip-row svg {
    margin-right: 3px;
  }

  .clip-row.fmt svg {
    margin-right: 1px;
  }

  .clip-row.off {
    color: #9ea2a8;
  }

  .clip-row.off svg:first-child {
    width: 14px;
  }

  .tool-rows {
    flex-direction: column;
    padding-top: 10px;
    gap: 8px;
  }

  .row {
    height: 22px;
    display: flex;
    align-items: center;
  }

  .combo {
    box-sizing: border-box;
    height: 21px;
    display: flex;
    align-items: center;
    justify-content: space-between;
    padding: 0 4px 0 3px;
    border: 1px solid #c3c6cb;
    background: #fff;
    color: #222;
    font-size: 11.5px;
  }

  .c-name {
    width: 85px;
    margin-left: 5px;
  }

  .c-size {
    width: 56px;
  }

  .styles-body {
    padding: 5px 0 0 7px;
    gap: 6px;
  }

  .gallery {
    box-sizing: border-box;
    width: 234px;
    height: 60px;
    display: flex;
    border: 1px solid #c9ccd1;
    background: #fff;
  }

  .style-card {
    flex: 1;
    padding: 6px 0 0 7px;
  }

  .sample {
    width: 58px;
    overflow: hidden;
    white-space: nowrap;
    font-family: "Liberation Serif", serif;
    font-size: 21px;
    line-height: 30px;
    font-weight: bold;
    color: #000;
  }

  .sample-name {
    margin: 0 0 0 4px;
    line-height: 16px;
    color: #3c4046;
  }

  .gal-scroll {
    width: 15px;
    display: flex;
    flex-direction: column;
    border-left: 1px solid #e3e5e8;
  }

  .gal-scroll span {
    flex: 1;
    display: flex;
    align-items: center;
    justify-content: center;
    border-bottom: 1px solid #e3e5e8;
  }

  .change {
    width: 51px;
    display: flex;
    flex-direction: column;
    align-items: center;
    white-space: nowrap;
    line-height: 13px;
    color: #33373c;
  }

  .change span:first-of-type {
    margin-top: 5px;
  }

  .change-2 {
    display: flex;
    align-items: center;
    gap: 4px;
    white-space: pre;
  }

  .edit-list {
    flex-direction: column;
    padding: 2px 0 0 9px;
  }

  .edit-row {
    height: 22px;
    display: flex;
    align-items: center;
    color: #33373c;
  }

  .edit-row span {
    margin: 0 7px 0 4px;
  }

  .edit-row.sel svg:first-child {
    margin: 0 3px 0 3px;
  }

  .workspace {
    flex: 1;
    min-height: 0;
    display: grid;
    grid-template-columns: 25px 1fr 17px;
    grid-template-rows: 31px 1fr;
    background: linear-gradient(#ccd0d5, #b8bbc0);
  }

  .corner {
    position: relative;
  }

  .tab-stop {
    box-sizing: border-box;
    width: 24px;
    height: 24px;
    margin: 3px 0 0 1px;
    border: 1px solid #85888d;
    display: flex;
    align-items: center;
    justify-content: center;
  }

  .tab-stop svg {
    padding: 3px 3px 4px 4px;
    background: #f7f8f9;
    outline: 1px solid #85888d;
  }

  .rnum {
    font-family: "Noto Sans", sans-serif;
    font-size: 10px;
    fill: #5c6168;
  }

  .hruler {
    grid-column: 2;
    grid-row: 1;
  }

  .vruler {
    grid-column: 1;
    grid-row: 2;
    margin-top: -1px;
  }

  .scrollbar {
    grid-column: 3;
    grid-row: 1 / 3;
    display: flex;
    flex-direction: column;
    align-items: center;
    background: #dde0e4;
  }

  .split {
    width: 9px;
    height: 1px;
    margin-top: 6px;
    background: #8a8d92;
  }

  .view-btn {
    box-sizing: border-box;
    width: 17px;
    height: 17px;
    margin-top: 2px;
    border: 1px solid #85888d;
    display: flex;
    align-items: center;
    justify-content: center;
    background: #cfd2d6;
  }

  .sb-arrow {
    margin-top: 6px;
  }

  .thumb {
    box-sizing: border-box;
    width: 15px;
    height: 482px;
    margin-top: 5px;
    border: 1px solid #9a9fa6;
    border-radius: 2px;
    background: linear-gradient(90deg, #f6f7f9, #d8dce2);
    display: flex;
    flex-direction: column;
    align-items: center;
    justify-content: center;
    gap: 1px;
  }

  .thumb i {
    width: 7px;
    height: 1px;
    background: #70757c;
  }

  .sb-down { margin-top: 118px; }
  .sb-prev { margin-top: 8px; }
  .sb-dot { margin-top: 10px; }
  .sb-next { margin-top: 9px; }

  .canvas {
    grid-column: 2;
    grid-row: 2;
    min-height: 0;
    overflow: hidden;
    padding: 1px 0 0 217px;
  }

  .page {
    position: relative;
    box-sizing: border-box;
    width: 1124px;
    height: 800px;
    background: #fff;
    box-shadow: 0 0 7px rgba(60, 64, 70, .6);
    font-family: "Liberation Serif", serif;
    color: #000;
  }

  .head {
    display: flex;
    padding: 19px 34px 0 57px;
  }

  h1 {
    flex: 1;
    margin: 36px 0 0;
    text-align: center;
    font-size: 18.67px;
    line-height: 22px;
    letter-spacing: .35px;
    color: #1f3864;
  }

  table {
    border-collapse: collapse;
    table-layout: fixed;
    width: 1045px;
    margin: 22px 0 0 47px;
    font-size: 14.67px;
    line-height: 15px;
  }

  tr {
    height: 16.75px;
  }

  th, td {
    padding: 0;
    border: 1px solid #000;
    text-align: center;
    white-space: nowrap;
  }

  th {
    color: #f00;
  }

  .lft {
    text-align: left;
    padding-left: 5px;
  }

  .lft4 {
    text-align: left;
    padding-left: 4px;
  }

  .name {
    text-align: left;
    padding-left: 5px;
  }

  .sp {
    text-decoration: underline wavy #f00 1px;
    text-underline-offset: 2px;
  }

  .score, .res {
    font-weight: bold;
  }

  .score {
    text-decoration: underline;
  }

  .r-pts {
    padding-right: 2px;
  }

  .r-place {
    padding-right: 7px;
  }

  .gr {
    text-decoration: underline wavy #2a9d2a 1px;
    text-underline-offset: 2px;
  }

  .black {
    background: #000;
  }

  .results {
    margin: 30px 0 0 38px;
    font-size: 18.67px;
    line-height: 21px;
  }

  .results p {
    margin: 0 0 14.5px;
  }

  .names {
    letter-spacing: .1px;
  }

  .caret {
    position: absolute;
    left: 561px;
    top: 561px;
    width: 2px;
    height: 17px;
    background: #000;
  }

  .status {
    height: 21px;
    flex: none;
    display: flex;
    align-items: center;
    border-top: 1px solid #a9adb3;
    background: linear-gradient(#e9ebee, #d0d3d8);
    color: #43474d;
  }

  .seg {
    height: 100%;
    display: flex;
    align-items: center;
    box-sizing: border-box;
    border-right: 1px solid #b5b8bd;
  }

  .s1 { width: 106px; padding-left: 8px; }
  .s2 { width: 102px; padding-left: 9px; }
  .s3 { width: 93px; padding-left: 7px; gap: 16px; }

  .status-right {
    margin-left: auto;
    display: flex;
    align-items: center;
    height: 100%;
    padding-right: 3px;
  }

  .status-sep {
    width: 1px;
    height: 100%;
    background: #b5b8bd;
  }

  .zoom-val {
    margin-left: 12px;
    width: 36px;
  }

  .taskbar {
    height: 40px;
    flex: none;
    display: flex;
    align-items: center;
    background: linear-gradient(90deg, #8ea6c0, #a6bdd7 6%, #a8bfd9 80%, #8497ae 85.5%, #7d8ea6);
    color: #fff;
  }

  .orb {
    margin-left: 8px;
  }

  .task {
    height: 38px;
    box-sizing: border-box;
    display: flex;
    align-items: center;
    justify-content: center;
  }

  .box {
    border: 1px solid #5e6f85;
    border-radius: 3px;
    background: linear-gradient(rgba(255, 255, 255, .5), rgba(255, 255, 255, .15));
  }

  .t-ie { margin-left: 30px; width: 32px; }
  .t-explorer { margin-left: 14px; width: 60px; }
  .t-media { margin-left: 18px; width: 30px; }
  .t-chrome { margin-left: 31px; width: 30px; }
  .t-yandex { margin-left: 18px; width: 58px; }
  .t-ya { margin-left: 18px; width: 30px; }
  .t-ps { margin-left: 33px; width: 28px; }
  .t-word { margin-left: 19px; width: 53px; }

  .task-sliver {
    width: 3px;
    height: 38px;
    margin-left: 1px;
    border: 1px solid #5e6f85;
    border-left: none;
    border-radius: 0 3px 3px 0;
    background: rgba(255, 255, 255, .3);
  }

  .tray {
    margin-left: auto;
    display: flex;
    align-items: center;
    height: 100%;
  }

  .lang {
    font-size: 12px;
    color: #eef1f5;
    padding-bottom: 6px;
  }

  .clock {
    width: 74px;
    margin-left: 8px;
    display: flex;
    flex-direction: column;
    align-items: center;
    font-size: 12px;
    line-height: 16px;
  }

  .show-desktop {
    box-sizing: border-box;
    width: 15px;
    height: 36px;
    margin-left: 1px;
    border: 1px solid #56647a;
    background: linear-gradient(90deg, #9aa9bd, #7d8ea6);
  }
</style>
